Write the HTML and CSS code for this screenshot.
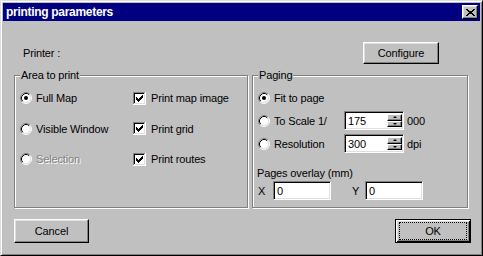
FILE: index.html
```html
<!DOCTYPE html>
<html lang="en">
<head>
  <meta charset="UTF-8" />
  <title>printing parameters</title>
  <link rel="stylesheet" href="styles.css">
</head>
<body>
  <svg class="defs" width="0" height="0">
    <symbol id="radio" viewBox="0 0 12 12">
      <circle cx="6" cy="6" r="5" class="radio-fill" />
      <path d="M2.11 9.89 A5.5 5.5 0 0 1 9.89 2.11" stroke="#808080" fill="none" />
      <path d="M9.89 2.11 A5.5 5.5 0 0 1 2.11 9.89" stroke="#fff" fill="none" />
      <path d="M2.82 9.18 A4.5 4.5 0 0 1 9.18 2.82" stroke="#000" fill="none" />
      <path d="M9.18 2.82 A4.5 4.5 0 0 1 2.82 9.18" stroke="#dfdfdf" fill="none" />
    </symbol>
    <symbol id="check" viewBox="0 0 13 13">
      <path fill="#808080" d="M0 0h12v1H1v11H0z" />
      <path fill="#fff" d="M12 0h1v13H0v-1h12z" />
      <path fill="#000" d="M1 1h10v1H2v9H1z" />
      <path fill="#dfdfdf" d="M11 1h1v11H1v-1h10z" />
      <rect x="2" y="2" width="9" height="9" fill="#fff" />
      <path fill="#000" d="M9 3h1v1H9zM8 4h2v1H8zM3 5h1v1H3zM7 5h3v1H7zM3 6h2v1H3zM6 6h3v1H6zM3 7h5v1H3zM4 8h3v1H4zM5 9h1v1H5z" />
    </symbol>
  </svg>

  <div class="window">
    <div class="titlebar">
      <span class="title">printing parameters</span>
      <span class="close">
        <svg width="9" height="7" viewBox="0 0 9 7" shape-rendering="crispEdges">
          <path fill="#000" d="M0 0h2v1H0zM7 0h2v1H7zM1 1h2v1H1zM6 1h2v1H6zM2 2h5v1H2zM3 3h3v1H3zM2 4h5v1H2zM1 5h2v1H1zM6 5h2v1H6zM0 6h2v1H0zM7 6h2v1H7z" />
        </svg>
      </span>
    </div>

    <div class="content">
      <div class="top-row">
        <span class="printer-label">Printer :</span>
        <button class="btn configure">Configure</button>
      </div>

      <div class="groups">
        <div class="group area">
          <span class="legend">Area to print</span>
          <div class="area-grid">
            <label class="opt"><svg class="radio checked" width="12" height="12"><use href="#radio" /><circle cx="6" cy="6" r="2" /></svg>Full Map</label>
            <label class="opt"><svg class="cb" width="13" height="13" shape-rendering="crispEdges"><use href="#check" /></svg>Print map image</label>
            <label class="opt"><svg class="radio" width="12" height="12"><use href="#radio" /></svg>Visible Window</label>
            <label class="opt"><svg class="cb" width="13" height="13" shape-rendering="crispEdges"><use href="#check" /></svg>Print grid</label>
            <label class="opt disabled"><svg class="radio" width="12" height="12"><use href="#radio" /></svg>Selection</label>
            <label class="opt"><svg class="cb" width="13" height="13" shape-rendering="crispEdges"><use href="#check" /></svg>Print routes</label>
          </div>
        </div>

        <div class="group paging">
          <span class="legend">Paging</span>
          <div class="paging-rows">
            <div class="prow">
              <label class="opt"><svg class="radio checked" width="12" height="12"><use href="#radio" /><circle cx="6" cy="6" r="2" /></svg>Fit to page</label>
            </div>
            <div class="prow">
              <label class="opt wide"><svg class="radio" width="12" height="12"><use href="#radio" /></svg>To Scale 1/</label>
              <div class="field spin">
                <span class="value">175</span>
                <span class="spin-btns"><span class="sb up"></span><span class="sb down"></span></span>
              </div>
              <span class="unit">000</span>
            </div>
            <div class="prow">
              <label class="opt wide"><svg class="radio" width="12" height="12"><use href="#radio" /></svg>Resolution</label>
              <div class="field spin">
                <span class="value">300</span>
                <span class="spin-btns"><span class="sb up"></span><span class="sb down"></span></span>
              </div>
              <span class="unit">dpi</span>
            </div>
          </div>
          <div class="overlay-label">Pages overlay (mm)</div>
          <div class="overlay-row">
            <span class="axis">X</span>
            <div class="field small"><span class="value">0</span></div>
            <span class="axis y">Y</span>
            <div class="field small"><span class="value">0</span></div>
          </div>
        </div>
      </div>

      <div class="bottom-row">
        <button class="btn cancel">Cancel</button>
        <button class="btn default"><span class="focus">OK</span></button>
      </div>
    </div>
  </div>
</body>
</html>
```

FILE: styles.css
```css
body {
  margin: 0;
  font-family: "Liberation Sans", Arial, sans-serif;
  font-size: 11px;
  letter-spacing: -0.15px;
  color: #000;
}
.defs {
  position: absolute;
}
.window {
  width: 483px;
  height: 256px;
  box-sizing: border-box;
  background: #c0c0c0;
  border: 1px solid;
  border-color: #dfdfdf #000 #000 #dfdfdf;
  box-shadow: inset 1px 1px #fff, inset -1px -1px #808080;
  padding: 2px;
  display: flex;
  flex-direction: column;
}
.titlebar {
  height: 18px;
  background: #000080;
  color: #fff;
  display: flex;
  align-items: center;
  justify-content: space-between;
  padding: 0 2px 0 3px;
}
.title {
  font-weight: bold;
  font-size: 12px;
  letter-spacing: -0.3px;
}
.close {
  width: 16px;
  height: 14px;
  box-sizing: border-box;
  background: #c0c0c0;
  border: 1px solid;
  border-color: #fff #000 #000 #fff;
  box-shadow: inset -1px -1px #808080, inset 1px 1px #dfdfdf;
  display: flex;
  align-items: center;
  justify-content: center;
}
.content {
  padding: 0 9px 0 11px;
}
.btn {
  font: inherit;
  letter-spacing: inherit;
  color: #000;
  background: #c0c0c0;
  border: 1px solid;
  border-color: #fff #000 #000 #fff;
  box-shadow: inset -1px -1px #808080, inset 1px 1px #dfdfdf;
  padding: 0;
}
.top-row {
  margin-top: 21px;
  height: 22px;
  display: flex;
  align-items: center;
}
.printer-label {
  margin-left: 9px;
}
.configure {
  margin-left: auto;
  margin-right: 32px;
  width: 76px;
  height: 22px;
}
.groups {
  display: flex;
  gap: 4px;
  margin-top: 11px;
  height: 133px;
}
.group {
  position: relative;
  box-sizing: border-box;
  border: 1px solid #808080;
  box-shadow: 1px 1px #fff, inset 1px 1px #fff;
}
.area {
  width: 234px;
}
.paging {
  width: 216px;
}
.legend {
  position: absolute;
  top: -7px;
  left: 5px;
  line-height: 13px;
  padding: 0 1px;
  background: #c0c0c0;
}
.opt {
  display: flex;
  align-items: center;
  white-space: nowrap;
}
.radio {
  margin-right: 4px;
  flex: none;
}
.radio-fill {
  fill: #fff;
}
.disabled .radio-fill {
  fill: #c0c0c0;
}
.disabled {
  color: #808080;
  text-shadow: 1px 1px #fff;
}
.cb {
  margin-right: 5px;
  flex: none;
}
.area-grid {
  display: grid;
  grid-template-columns: 113px 1fr;
  grid-template-rows: 30px 31px 30px;
  padding: 7px 0 0 5px;
}
.paging-rows {
  padding: 10px 0 0 5px;
}
.prow {
  height: 23px;
  display: flex;
  align-items: center;
}
.wide {
  width: 86px;
}
.field {
  box-sizing: border-box;
  height: 19px;
  background: #fff;
  border: 1px solid;
  border-color: #808080 #fff #fff #808080;
  box-shadow: inset 1px 1px #000, inset -1px -1px #dfdfdf;
  display: flex;
  align-items: center;
}
.value {
  flex: 1;
  padding-left: 3px;
}
.spin {
  width: 60px;
  padding: 2px 1px 2px 2px;
  align-items: stretch;
}
.spin .value {
  display: flex;
  align-items: center;
  padding-left: 1px;
}
.spin-btns {
  width: 15px;
  display: flex;
  flex-direction: column;
}
.sb {
  flex: 1;
  background: #c0c0c0;
  box-sizing: border-box;
  border: 1px solid;
  border-color: #fff #000 #000 #fff;
  box-shadow: inset -1px -1px #808080;
  display: flex;
  align-items: center;
  justify-content: center;
}
.sb::after {
  content: "";
  border-left: 2px solid transparent;
  border-right: 2px solid transparent;
}
.up::after {
  border-bottom: 2px solid #000;
}
.down::after {
  border-top: 2px solid #000;
}
.unit {
  margin-left: 3px;
}
.overlay-label {
  margin: 12px 0 0 4px;
}
.overlay-row {
  display: flex;
  align-items: center;
  margin: 2px 0 0 5px;
}
.axis {
  width: 15px;
}
.axis.y {
  margin-left: 21px;
  width: 13px;
}
.small {
  width: 58px;
}
.bottom-row {
  margin-top: 11px;
  display: flex;
  justify-content: space-between;
}
.cancel {
  width: 75px;
  height: 24px;
}
.default {
  width: 76px;
  height: 24px;
  border-color: #000;
  box-shadow: inset 1px 1px #fff, inset -1px -1px #000, inset 2px 2px #dfdfdf, inset -2px -2px #808080;
  display: flex;
  padding: 3px 4px;
}
.focus {
  flex: 1;
  display: flex;
  align-items: center;
  justify-content: center;
  outline: 1px dotted #000;
}
```
